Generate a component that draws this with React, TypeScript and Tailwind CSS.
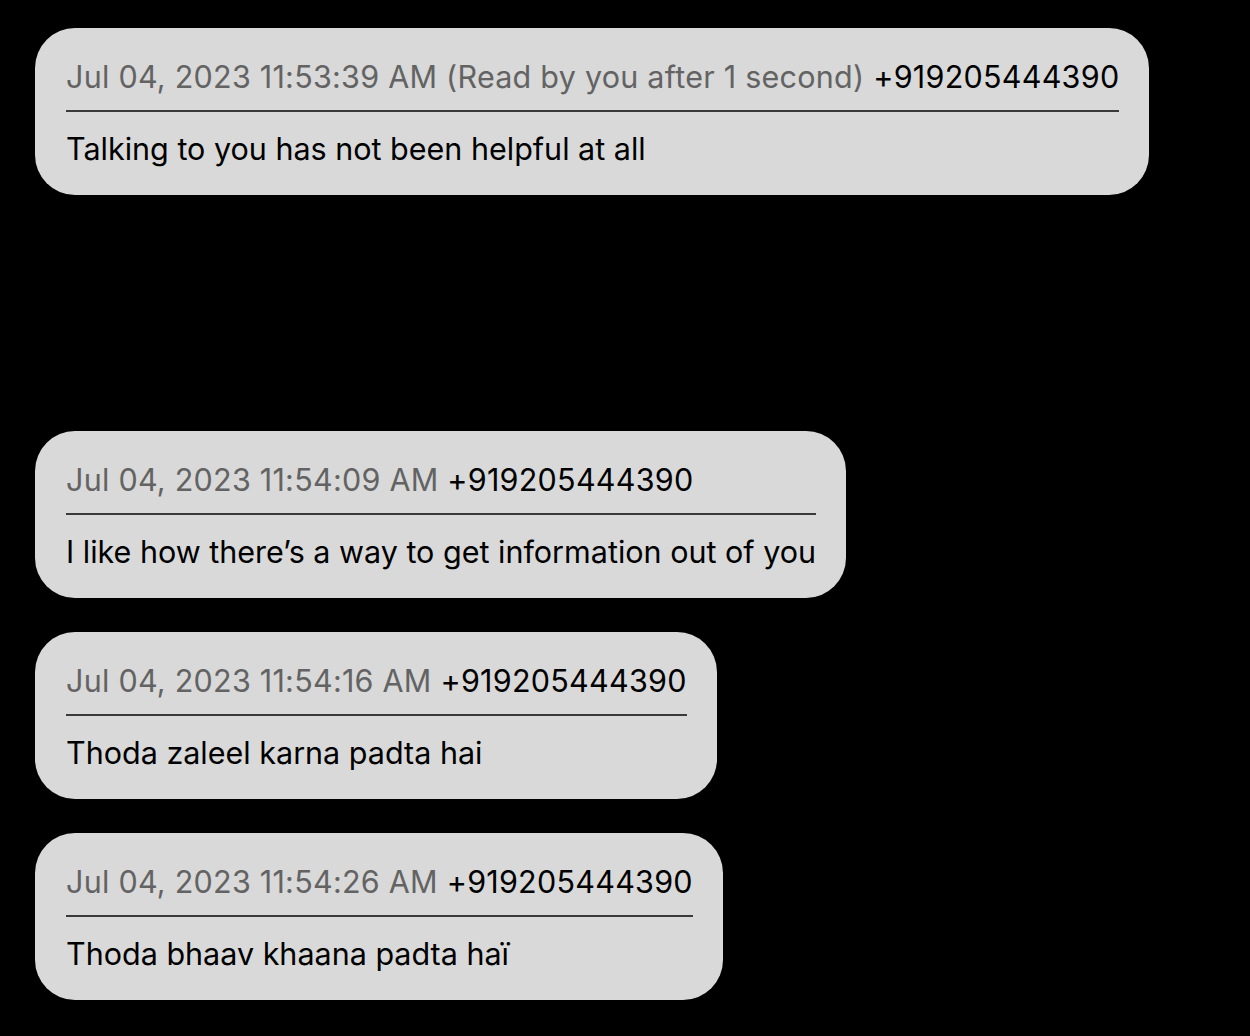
import { FC } from 'react';

type Message = {
  time: string;
  note?: string;
  sender: string;
  body: string;
};

const messages: Message[] = [
  {
    time: 'Jul 04, 2023 11:53:39 AM',
    note: '(Read by you after 1 second)',
    sender: '+919205444390',
    body: 'Talking to you has not been helpful at all',
  },
  {
    time: 'Jul 04, 2023 11:54:09 AM',
    sender: '+919205444390',
    body: 'I like how there’s a way to get information out of you',
  },
  {
    time: 'Jul 04, 2023 11:54:16 AM',
    sender: '+919205444390',
    body: 'Thoda zaleel karna padta hai',
  },
  {
    time: 'Jul 04, 2023 11:54:26 AM',
    sender: '+919205444390',
    body: 'Thoda bhaav khaana padta haï',
  },
];

const Bubble: FC<{ message: Message }> = ({ message }) => (
  <div className="w-fit rounded-[40px] bg-[#d9d9d9] pb-[28px] pl-[31px] pr-[30px] pt-[31px]">
    <p className="whitespace-nowrap text-[30.5px] leading-[36px] tracking-[0.25px]">
      <span className="text-[#636363]">
        {message.time}
        {message.note && ` ${message.note}`}
      </span>{' '}
      <span className="text-black">{message.sender}</span>
    </p>
    <div className="mb-[19px] mt-[15px] h-[2px] bg-[#3a3a3a]" />
    <p className="whitespace-nowrap text-[30.5px] leading-[36px] text-black">
      {message.body}
    </p>
  </div>
);

export default function App() {
  const [first, ...rest] = messages;
  return (
    <div className="min-h-[1036px] bg-black pl-[35px] pt-[28px] font-['Inter','Liberation_Sans',sans-serif]">
      <Bubble message={first} />
      <div className="h-[236px]" />
      <div className="flex flex-col gap-[34px]">
        {rest.map((m) => (
          <Bubble key={m.time} message={m} />
        ))}
      </div>
    </div>
  );
}
